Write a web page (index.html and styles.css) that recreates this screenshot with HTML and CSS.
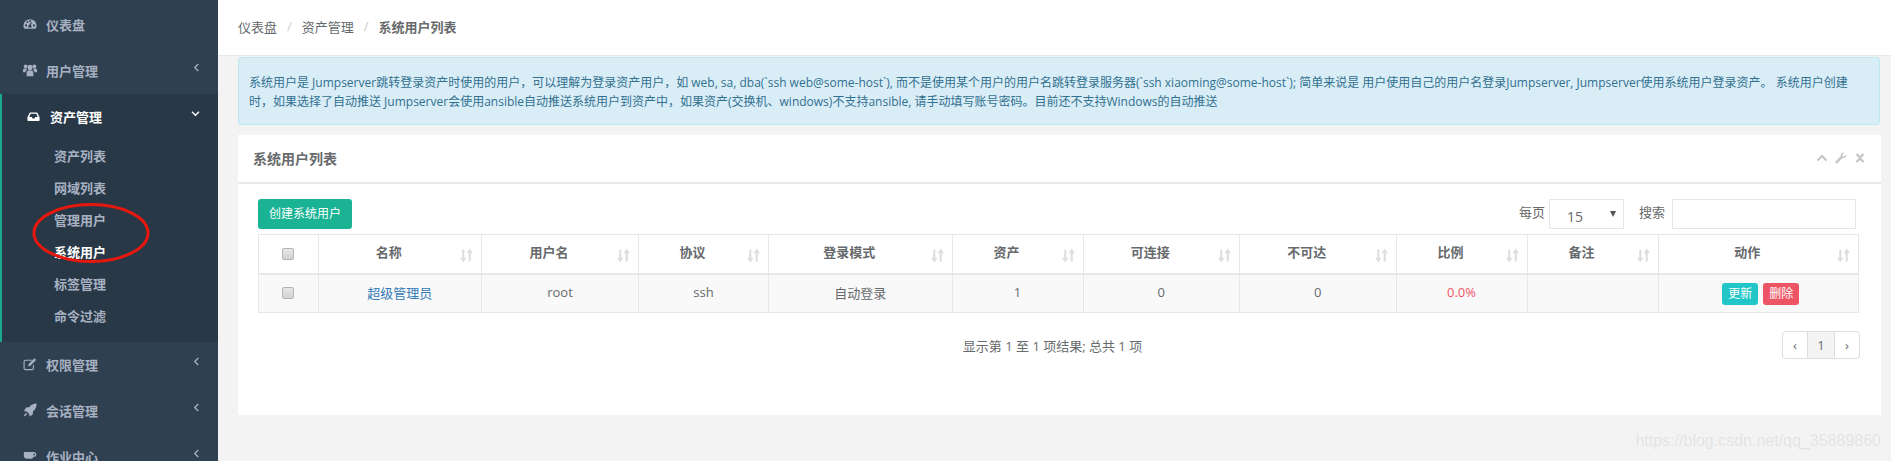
FILE: index.html
```html
<!DOCTYPE html>
<html lang="zh">
<head>
    <meta charset="UTF-8">
    <title>系统用户列表</title>
    <link rel="stylesheet" href="styles.css">
</head>
<body>
    <div class="wrapper">
        <aside class="sidebar">
            <a class="nav-item">
                <svg class="nav-icon" viewBox="0 0 16 16"><path fill-rule="evenodd" d="M8 2.500a7.500 7.500 0 0 0-7.500 7.500c0 1.600.5 2.900 1.300 3.500h12.400c.8-.6 1.300-1.900 1.300-3.500A7.500 7.500 0 0 0 8 2.500zM3.500 10.800a1.200 1.200 0 1 1 0-2.400 1.200 1.200 0 0 1 0 2.400zM5 6.800a1.100 1.100 0 1 1 0-2.200 1.100 1.100 0 0 1 0 2.200zM8 5.600a1.100 1.100 0 1 1 0-2.200 1.100 1.100 0 0 1 0 2.200zM9.600 12H6.400a1.600 1.600 0 0 1 .8-2.700l2-3.800.8.300-1 4a1.600 1.600 0 0 1 .6 2.200zM12.500 10.800a1.200 1.200 0 1 1 0-2.400 1.200 1.200 0 0 1 0 2.400z"/></svg>
                <span>仪表盘</span>
            </a>
            <a class="nav-item">
                <svg class="nav-icon" viewBox="0 0 16 16"><circle cx="8" cy="5" r="2.900"/><circle cx="3" cy="3.800" r="2.100"/><circle cx="13" cy="3.800" r="2.100"/><path d="M4.200 15V10.500C4.200 9 6 8.200 8 8.200s3.800.8 3.800 2.300V15zM0 10.500V8C0 6.800 1.200 6.400 3 6.400c.5 0 1 0 1.300.2-.3.600-.2 1.200.1 1.700-1 .4-1.500 1.200-1.500 2.200zM16 10.500V8c0-1.200-1.200-1.600-3-1.600-.5 0-1 0-1.300.2.300.6.200 1.200-.1 1.700 1 .4 1.500 1.200 1.500 2.200z"/></svg>
                <span>用户管理</span>
                <svg class="nav-arrow" viewBox="0 0 8 10"><path d="M6 1 2 5l4 4"/></svg>
            </a>
            <div class="nav-group">
                <a class="nav-item active">
                    <svg class="nav-icon" viewBox="0 0 16 16"><path fill-rule="evenodd" d="M3.500 3h9L15.500 9v3.500c0 .6-.4 1-1 1h-13c-.6 0-1-.4-1-1V9zM4.500 4.600 2.800 8.700h3.100l.9 1.700h2.400l.9-1.700h3.100L11.500 4.600z"/></svg>
                    <span>资产管理</span>
                    <svg class="nav-arrow" viewBox="0 0 10 8"><path d="M1 2l4 4 4-4"/></svg>
                </a>
                <ul class="sub-nav">
                    <li>资产列表</li>
                    <li>网域列表</li>
                    <li>管理用户</li>
                    <li class="current">系统用户</li>
                    <li>标签管理</li>
                    <li>命令过滤</li>
                </ul>
            </div>
            <a class="nav-item">
                <svg class="nav-icon" viewBox="0 0 16 16"><path d="M2.800 3h7.200v1.300H2.800c-.5 0-.9.4-.9.900v7.600c0 .5.4.9.9.9h7.600c.5 0 .9-.4.9-.9V10l1.300-1.300v4.100c0 1.200-1 2.200-2.200 2.200H2.800c-1.200 0-2.200-1-2.200-2.200V5.200C.6 4 1.600 3 2.800 3z"/><path d="M13 1.500 15 3.500 8.500 10 5.800 10.700 6.500 8z"/></svg>
                <span>权限管理</span>
                <svg class="nav-arrow" viewBox="0 0 8 10"><path d="M6 1 2 5l4 4"/></svg>
            </a>
            <a class="nav-item">
                <svg class="nav-icon" viewBox="0 0 16 16"><path d="M15.500.5c.3 3.800-1 6.600-4 8.800l-.4 3.800-3.600 2.400-.6-3.100-2.800-2.800-3-.6L3.500 5.200l3.700-.4C9.200 1.800 12 .4 15.500.5zM3.600 11.300l1.300 1.300C4 14 2.500 14.800.7 15.400c.5-1.800 1.400-3.300 2.900-4.100z"/></svg>
                <span>会话管理</span>
                <svg class="nav-arrow" viewBox="0 0 8 10"><path d="M6 1 2 5l4 4"/></svg>
            </a>
            <a class="nav-item">
                <svg class="nav-icon" viewBox="0 0 16 16"><path fill-rule="evenodd" d="M1 3.500h11.500c1.700 0 2.800 1.100 2.800 2.700s-1.100 2.700-2.800 2.700h-.5c-.3 1.400-1.300 2.100-2.600 2.100H4.500C2.500 11 1 9.800 1 8zM12 5v2.400h.4c.8 0 1.300-.5 1.300-1.200S13.200 5 12.400 5z"/></svg>
                <span>作业中心</span>
                <svg class="nav-arrow" viewBox="0 0 8 10"><path d="M6 1 2 5l4 4"/></svg>
            </a>
        </aside>

        <main class="content">
            <div class="breadcrumb">
                <span>仪表盘</span>
                <i>/</i>
                <span>资产管理</span>
                <i>/</i>
                <strong>系统用户列表</strong>
            </div>

            <div class="alert">
                系统用户是 Jumpserver跳转登录资产时使用的用户，可以理解为登录资产用户，如 web, sa, dba(`ssh web@some-host`), 而不是使用某个用户的用户名跳转登录服务器(`ssh xiaoming@some-host`); 简单来说是 用户使用自己的用户名登录Jumpserver, Jumpserver使用系统用户登录资产。 系统用户创建时，如果选择了自动推送 Jumpserver会使用ansible自动推送系统用户到资产中，如果资产(交换机、windows)不支持ansible, 请手动填写账号密码。目前还不支持Windows的自动推送
            </div>

            <section class="card">
                <div class="card-title">
                    <h5>系统用户列表</h5>
                    <div class="card-tools">
                        <svg viewBox="0 0 12 12"><path d="M1.500 8.500 6 4l4.500 4.500" fill="none" stroke="currentColor" stroke-width="2.200"/></svg>
                        <svg viewBox="0 0 12 12"><path d="M11.500 2.500 9.300 4.600 7.700 4.200 7.300 2.600 9.400.6C7.800 0 6 .9 5.700 2.600c-.1.500 0 1 .1 1.400L.7 9.200c-.5.500-.5 1.300 0 1.800s1.300.5 1.800 0l5.100-5.100c1.900.6 3.800-.8 3.900-2.700 0-.3 0-.5 0-.7z"/></svg>
                        <svg viewBox="0 0 12 12"><path d="M2.500 2 6 5.500 9.500 2M2.500 10 6 6.500 9.500 10" fill="none" stroke="currentColor" stroke-width="2.400"/></svg>
                    </div>
                </div>
                <div class="card-body">
                    <div class="toolbar">
                        <a class="btn-create">创建系统用户</a>
                        <div class="filters">
                            <label>每页</label>
                            <div class="page-size">
                                <span>15</span>
                                <b></b>
                            </div>
                            <label class="search-label">搜索</label>
                            <input class="search" type="text">
                        </div>
                    </div>

                    <table class="data-table">
                        <colgroup>
                            <col class="c-check"><col class="c-name"><col class="c-user"><col class="c-proto"><col class="c-mode"><col class="c-num"><col class="c-ok"><col class="c-ok"><col class="c-num"><col class="c-num"><col>
                        </colgroup>
                        <thead>
                            <tr>
                                <th><input type="checkbox" class="check"></th>
                                <th>名称<svg class="sort" viewBox="0 0 12 14"><use href="#sort-icon"/></svg></th>
                                <th>用户名<svg class="sort" viewBox="0 0 12 14"><use href="#sort-icon"/></svg></th>
                                <th>协议<svg class="sort" viewBox="0 0 12 14"><use href="#sort-icon"/></svg></th>
                                <th>登录模式<svg class="sort" viewBox="0 0 12 14"><use href="#sort-icon"/></svg></th>
                                <th>资产<svg class="sort" viewBox="0 0 12 14"><use href="#sort-icon"/></svg></th>
                                <th>可连接<svg class="sort" viewBox="0 0 12 14"><use href="#sort-icon"/></svg></th>
                                <th>不可达<svg class="sort" viewBox="0 0 12 14"><use href="#sort-icon"/></svg></th>
                                <th>比例<svg class="sort" viewBox="0 0 12 14"><use href="#sort-icon"/></svg></th>
                                <th>备注<svg class="sort" viewBox="0 0 12 14"><use href="#sort-icon"/></svg></th>
                                <th>动作<svg class="sort" viewBox="0 0 12 14"><use href="#sort-icon"/></svg></th>
                            </tr>
                        </thead>
                        <tbody>
                            <tr>
                                <td><input type="checkbox" class="check"></td>
                                <td><a class="link">超级管理员</a></td>
                                <td>root</td>
                                <td>ssh</td>
                                <td>自动登录</td>
                                <td>1</td>
                                <td>0</td>
                                <td>0</td>
                                <td class="ratio">0.0%</td>
                                <td></td>
                                <td class="actions"><a class="btn-xs btn-update">更新</a><a class="btn-xs btn-delete">删除</a></td>
                            </tr>
                        </tbody>
                    </table>

                    <div class="table-foot">
                        <div class="table-info">显示第 1 至 1 项结果; 总共 1 项</div>
                        <div class="pager">
                            <a>‹</a>
                            <a class="on">1</a>
                            <a>›</a>
                        </div>
                    </div>
                </div>
            </section>
        </main>
    </div>

    <svg class="defs" aria-hidden="true">
        <symbol id="sort-icon" viewBox="0 0 12 14">
            <path d="M2 1.500h2V9h2l-3 4.500L0 9h2zM8 12.500h2V5h2L9 .5 6 5h2z" fill="#dedede"/>
        </symbol>
    </svg>

    <!-- red mark drawn over the screenshot -->
    <svg class="marker" viewBox="0 0 130 70"><ellipse cx="64" cy="34" rx="57" ry="28.500"/></svg>
    <div class="watermark">https://blog.csdn.net/qq_35889860</div>
</body>
</html>
```

FILE: styles.css
```css
* {
    margin: 0;
    padding: 0;
    box-sizing: border-box;
}
html, body {
    height: 461px;
    overflow: hidden;
}
body {
    font-family: "Open Sans", "Noto Sans CJK SC", sans-serif;
    font-size: 13px;
    color: #676a6c;
    background-color: #f3f3f4;
    position: relative;
}
.wrapper {
    display: flex;
    height: 461px;
}

/* sidebar */
.sidebar {
    width: 218px;
    flex-shrink: 0;
    height: 500px;
    padding-top: 2px;
    background-color: #2f4050;
    color: #a7b1c2;
    font-weight: 600;
}
.nav-item {
    display: flex;
    align-items: center;
    height: 46px;
    padding: 0 18px 2px 23px;
}
.nav-icon {
    width: 14px;
    height: 14px;
    margin-right: 9px;
    fill: currentColor;
    flex-shrink: 0;
}
.nav-arrow {
    width: 7px;
    height: 9px;
    margin-left: auto;
    margin-top: -6px;
    fill: none;
    stroke: currentColor;
    stroke-width: 1.500;
}
.nav-group {
    background-color: #293846;
    border-left: 2px solid #19aa8d;
    padding-bottom: 10px;
}
.nav-item.active {
    color: #ffffff;
    padding-left: 25px;
}
.nav-item.active .nav-icon {
    width: 13px;
    height: 13px;
    margin-right: 10px;
}
.nav-item.active .nav-arrow {
    width: 9px;
    height: 7px;
}
.sub-nav {
    list-style: none;
}
.sub-nav li {
    height: 32px;
    line-height: 32px;
    padding-left: 52px;
}
.sub-nav li.current {
    color: #ffffff;
}

/* main column */
.content {
    flex: 1;
    min-width: 0;
}
.breadcrumb {
    height: 56px;
    background-color: #ffffff;
    border-bottom: 1px solid #e7eaec;
    padding: 0 0 3px 20px;
    display: flex;
    align-items: center;
    color: #676a6c;
}
.breadcrumb i {
    font-style: normal;
    color: #cccccc;
    margin: 0 10px;
}
.breadcrumb strong {
    font-weight: 600;
}
.alert {
    margin: 1px 11px 10px 20px;
    height: 68px;
    padding: 15px 10px 0 10px;
    line-height: 19px;
    font-size: 12px;
    background-color: #d9edf7;
    border: 1px solid #bce8f1;
    border-radius: 3px;
    color: #31708f;
}
.card {
    margin-right: 10px;
    margin-left: 20px;
    height: 280px;
    background-color: #ffffff;
}
.card-title {
    height: 49px;
    border-bottom: 2px solid #e7eaec;
    display: flex;
    align-items: center;
    padding: 0 15px 2px 15px;
}
.card-title h5 {
    font-size: 14px;
    font-weight: 600;
    color: #676a6c;
}
.card-tools {
    margin-left: auto;
    display: flex;
    gap: 7px;
    color: #c4c6c7;
}
.card-tools svg {
    width: 12px;
    height: 12px;
    fill: currentColor;
}
.card-body {
    padding: 15px 22px 0 20px;
}
.toolbar {
    display: flex;
    justify-content: space-between;
    height: 30px;
    margin-bottom: 5px;
}
.btn-create {
    width: 94px;
    height: 30px;
    line-height: 30px;
    text-align: center;
    font-size: 12px;
    color: #ffffff;
    background-color: #1ab394;
    border-radius: 3px;
}
.filters {
    display: flex;
    align-items: flex-start;
    margin-right: 3px;
}
.filters label {
    line-height: 26px;
    margin-right: 4px;
}
.filters .search-label {
    margin-right: 7px;
}
.page-size {
    width: 75px;
    height: 30px;
    margin-right: 15px;
    border: 1px solid #e5e6e7;
    position: relative;
    padding: 7px 0 0 17px;
    line-height: 20px;
    font-size: 14px;
}
.page-size b {
    position: absolute;
    top: 11px;
    right: 7px;
    border-left: 3px solid transparent;
    border-right: 3px solid transparent;
    border-top: 6px solid #555555;
}
.search {
    width: 184px;
    height: 30px;
    border: 1px solid #e5e6e7;
    outline: none;
}

/* table */
.data-table {
    width: 1601px;
    table-layout: fixed;
    border-collapse: collapse;
    text-align: center;
}
.c-check { width: 59.500px; }
.c-name { width: 163.500px; }
.c-user { width: 157px; }
.c-proto { width: 130px; }
.c-mode { width: 183.500px; }
.c-num { width: 131px; }
.c-ok { width: 156.500px; }
.data-table th, .data-table td {
    border: 1px solid #e7e7e7;
}
.data-table th {
    height: 39px;
    border-bottom-width: 2px;
    position: relative;
    padding-right: 22px;
    padding-bottom: 5px;
    font-weight: 600;
    background-color: #ffffff;
}
.data-table td {
    height: 39px;
    padding-bottom: 2px;
    background-color: #f9f9f9;
}
.data-table th:first-child {
    padding-right: 0;
    padding-bottom: 2px;
}
.sort {
    position: absolute;
    right: 8px;
    top: 13px;
    width: 13px;
    height: 15px;
}
.defs {
    display: none;
}
.check {
    appearance: none;
    display: block;
    margin: 2px auto 0;
    width: 12px;
    height: 12px;
    background: linear-gradient(#e8e8e8, #d2d2d2);
    border: 1px solid #b5b5b5;
    border-radius: 2px;
}
.link {
    color: #337ab7;
}
.ratio {
    color: #ed5565;
}
.actions {
    padding-left: 5px;
}
.btn-xs {
    display: inline-block;
    height: 22px;
    line-height: 22px;
    width: 36px;
    font-size: 12px;
    color: #ffffff;
    border-radius: 3px;
    margin-top: 4px;
}
.btn-update {
    background-color: #23c6c8;
    margin-right: 5px;
}
.btn-delete {
    background-color: #ed5565;
}

/* footer of the table */
.table-foot {
    display: grid;
    grid-template-columns: 1fr auto;
    align-items: start;
    margin-top: 18px;
    margin-right: -1px;
}
.table-info {
    text-align: center;
    padding-left: 65px;
    line-height: 30px;
}
.pager {
    display: flex;
    height: 28px;
    border: 1px solid #dddddd;
    border-radius: 4px;
    line-height: 26px;
    text-align: center;
}
.pager a {
    width: 24px;
}
.pager a.on {
    width: 28px;
    background-color: #f4f4f4;
    border-left: 1px solid #dddddd;
    border-right: 1px solid #dddddd;
}

/* overlays */
.marker {
    position: absolute;
    left: 27px;
    top: 199px;
    width: 130px;
    height: 70px;
    fill: none;
    stroke: #e8170d;
    stroke-width: 3;
}
.watermark {
    position: absolute;
    right: 10px;
    top: 432px;
    font-family: "Liberation Sans", sans-serif;
    font-size: 16px;
    color: #e2e2e2;
    text-shadow: 0 0 1px #ffffff;
}
```
